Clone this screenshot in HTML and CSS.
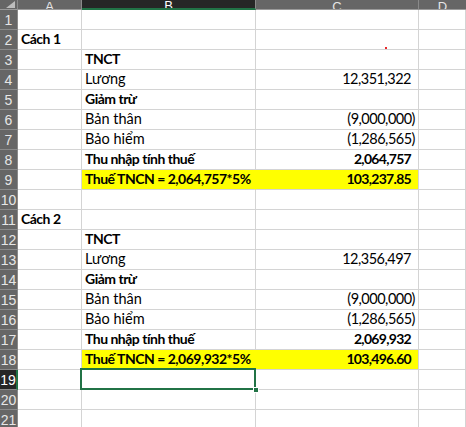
FILE: index.html
```html
<!DOCTYPE html>
<html>
<head>
<meta charset="utf-8">
<link rel="stylesheet" href="styles.css">
</head>
<body>
<div class="sheet">
  <div class="corner"><span class="tri"></span></div>
  <div class="ch"><span>A</span></div>
  <div class="ch ch-sel"><span>B</span></div>
  <div class="ch"><span>C</span></div>
  <div class="ch ch-last"><span>D</span></div>

  <div class="rh">1</div><div class="c"></div><div class="c"></div><div class="c"></div><div class="c"></div>
  <div class="rh">2</div><div class="c b">Cách 1</div><div class="c"></div><div class="c"><span class="dot"></span></div><div class="c"></div>
  <div class="rh">3</div><div class="c"></div><div class="c b">TNCT</div><div class="c"></div><div class="c"></div>
  <div class="rh">4</div><div class="c"></div><div class="c">Lương</div><div class="c num">12,351,322</div><div class="c"></div>
  <div class="rh">5</div><div class="c"></div><div class="c b">Giảm trừ</div><div class="c"></div><div class="c"></div>
  <div class="rh">6</div><div class="c"></div><div class="c">Bản thân</div><div class="c num neg">(9,000,000)</div><div class="c"></div>
  <div class="rh">7</div><div class="c"></div><div class="c">Bảo hiểm</div><div class="c num neg">(1,286,565)</div><div class="c"></div>
  <div class="rh">8</div><div class="c"></div><div class="c b">Thu nhập tính thuế</div><div class="c num b">2,064,757</div><div class="c"></div>
  <div class="rh">9</div><div class="c"></div><div class="c b hl hl-l">Thuế TNCN = 2,064,757*5%</div><div class="c num b hl">103,237.85</div><div class="c"></div>
  <div class="rh">10</div><div class="c"></div><div class="c"></div><div class="c"></div><div class="c"></div>
  <div class="rh">11</div><div class="c b">Cách 2</div><div class="c"></div><div class="c"></div><div class="c"></div>
  <div class="rh">12</div><div class="c"></div><div class="c b">TNCT</div><div class="c"></div><div class="c"></div>
  <div class="rh">13</div><div class="c"></div><div class="c">Lương</div><div class="c num">12,356,497</div><div class="c"></div>
  <div class="rh">14</div><div class="c"></div><div class="c b">Giảm trừ</div><div class="c"></div><div class="c"></div>
  <div class="rh">15</div><div class="c"></div><div class="c">Bản thân</div><div class="c num neg">(9,000,000)</div><div class="c"></div>
  <div class="rh">16</div><div class="c"></div><div class="c">Bảo hiểm</div><div class="c num neg">(1,286,565)</div><div class="c"></div>
  <div class="rh">17</div><div class="c"></div><div class="c b">Thu nhập tính thuế</div><div class="c num b">2,069,932</div><div class="c"></div>
  <div class="rh">18</div><div class="c"></div><div class="c b hl hl-l">Thuế TNCN = 2,069,932*5%</div><div class="c num b hl">103,496.60</div><div class="c"></div>
  <div class="rh rh-sel">19</div><div class="c"></div><div class="c active"><span class="handle"></span></div><div class="c"></div><div class="c"></div>
  <div class="rh">20</div><div class="c"></div><div class="c"></div><div class="c"></div><div class="c"></div>
  <div class="rh">21</div><div class="c"></div><div class="c"></div><div class="c"></div><div class="c"></div>
</div>
</body>
</html>
```
FILE: styles.css
```css
* { box-sizing: border-box; }
html, body { margin: 0; padding: 0; background: #ffffff; }
body { width: 466px; height: 427px; overflow: hidden; }

.sheet {
  display: grid;
  grid-template-columns: 18px 64px 174px 163px 47px;
  grid-template-rows: 10px repeat(21, 20px);
  font-family: "Lato", "Liberation Sans", sans-serif;
  font-size: 14.5px;
  color: #000;
}

.corner {
  background: #666666;
  border-right: 1px solid #8a8a8a;
  border-bottom: 1px solid #9a9a9a;
  position: relative;
  overflow: hidden;
}
.tri {
  position: absolute;
  right: 2px;
  bottom: 1px;
  width: 0; height: 0;
  border-left: 9px solid transparent;
  border-bottom: 7px solid #bdbdbd;
}

.ch {
  background: #666666;
  border-right: 1px solid #8a8a8a;
  border-bottom: 1px solid #9a9a9a;
  overflow: hidden;
  display: flex;
  justify-content: center;
  align-items: flex-end;
  color: #e6e6e6;
  font-family: "Liberation Sans", sans-serif;
  font-size: 13px;
}
.ch span { line-height: 13px; margin-bottom: -4px; }
.ch-sel {
  background: #262626;
  border-bottom: 2px solid #217346;
  color: #ffffff;
}
.ch-last { border-right: none; }

.rh {
  background: #666666;
  border-right: 1px solid #8a8a8a;
  border-bottom: 1px solid #8a8a8a;
  color: #e6e6e6;
  font-family: "Liberation Sans", sans-serif;
  font-size: 14px;
  display: flex;
  align-items: flex-end;
  justify-content: center;
  padding-bottom: 1px;
  line-height: 16px;
}
.rh-sel {
  background: #262626;
  color: #ffffff;
  border-right: 2px solid #217346;
}

.c {
  border-right: 1px solid #d4d4d4;
  border-bottom: 1px solid #d4d4d4;
  display: flex;
  align-items: flex-end;
  padding: 0 3px 2px 3px;
  line-height: 16px;
  white-space: nowrap;
  position: relative;
}
.b { font-weight: 700; font-size: 14px; letter-spacing: -0.5px; }
.num { justify-content: flex-end; padding-right: 7px; letter-spacing: -0.5px; }
.num.b { letter-spacing: -0.7px; }
.num.neg { padding-right: 3px; }

.hl { background: #ffff00; border-right-color: #ffff00; }
.hl.num { border-right-color: #d4d4d4; }

.dot {
  position: absolute;
  left: 129px;
  top: 17px;
  width: 2px;
  height: 2px;
  background: #e8282b;
}

.active { overflow: visible; }
.active::before {
  content: "";
  position: absolute;
  left: -2px;
  top: -2px;
  right: -1px;
  bottom: -1px;
  border: 2px solid #217346;
  pointer-events: none;
}
.handle {
  position: absolute;
  right: -4px;
  bottom: -4px;
  width: 6px;
  height: 6px;
  background: #217346;
  border: 1px solid #ffffff;
  z-index: 2;
}
```
